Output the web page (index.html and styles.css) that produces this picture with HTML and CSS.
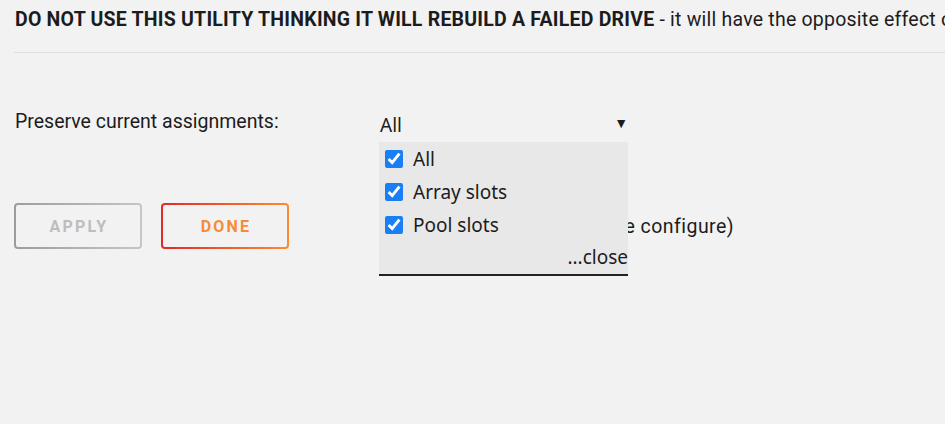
FILE: index.html
```html
<!DOCTYPE html>
<html lang="en">
<head>
<meta charset="utf-8">
<title>New Config</title>
<link rel="stylesheet" href="styles.css">
</head>
<body>
<div class="page">
  <p class="warning"><b>DO NOT USE THIS UTILITY THINKING IT WILL REBUILD A FAILED DRIVE</b> - it will have the opposite effect of making it impossible to rebuild an existing failed drive - you have been warned!</p>
  <hr class="rule">
  <form class="config">
    <div class="field">
      <span class="field-label">Preserve current assignments:</span>
      <div class="multi">
        <div class="multi-value"><span>All</span><span class="caret">&#9660;</span></div>
        <div class="multi-menu">
          <label class="multi-option"><input type="checkbox" checked><span>All</span></label>
          <label class="multi-option"><input type="checkbox" checked><span>Array slots</span></label>
          <label class="multi-option"><input type="checkbox" checked><span>Pool slots</span></label>
          <div class="multi-close">...close</div>
        </div>
      </div>
    </div>
    <div class="actions">
      <button type="button" class="btn btn-apply" disabled>Apply</button>
      <button type="button" class="btn btn-done">Done</button>
      <span class="note">(slots are cleared in the configure)</span>
    </div>
  </form>
</div>
</body>
</html>
```
FILE: styles.css
```css
html, body {
  margin: 0;
  background: #f2f2f2;
}

.page {
  box-sizing: border-box;
  min-height: 424px;
  font-family: Roboto, "Liberation Sans", sans-serif;
  font-size: 19.5px;
  line-height: 1.4;
  color: #1c1c1c;
  padding: 6px 0 0 15px;
}

.warning {
  margin: 0;
  white-space: nowrap;
  overflow: hidden;
  letter-spacing: 0.22px;
}

.warning b {
  font-weight: 700;
}

.rule {
  border: 0;
  border-top: 1px solid #dedede;
  margin: 19px 0 0 -1px;
}

.config {
  margin-top: 55px;
}

.field {
  display: flex;
  align-items: flex-start;
}

.field-label {
  width: 365px;
  flex: none;
}

.multi {
  position: relative;
  width: 249px;
  font-family: "Noto Sans", sans-serif;
  font-size: 19px;
}

.multi-value {
  display: flex;
  justify-content: space-between;
  align-items: center;
  height: 34px;
}

.caret {
  font-size: 14px;
  margin-right: 1px;
  margin-top: -5px;
}

.multi-menu {
  position: absolute;
  top: 34px;
  left: -1px;
  width: 249px;
  background: #e8e8e8;
  border-bottom: 2px solid #222;
  z-index: 2;
}

.multi-option {
  display: flex;
  align-items: center;
  gap: 10px;
  height: 33px;
  padding-left: 6px;
}

.multi-option input {
  width: 18px;
  height: 18px;
  margin: 0;
  accent-color: #1a7ef5;
}

.multi-close {
  text-align: right;
  line-height: 33px;
}

.actions {
  display: flex;
  align-items: center;
  width: 720px;
  margin-top: 61px;
  margin-left: -1px;
}

.btn {
  width: 128px;
  height: 46px;
  margin: 0 19px 0 0;
  border: 2px solid transparent;
  border-radius: 4px;
  font-family: Roboto, "Liberation Sans", sans-serif;
  font-size: 16px;
  font-weight: 700;
  letter-spacing: 2.2px;
  text-transform: uppercase;
  padding: 0 0 0 2px;
}

.btn-apply {
  color: #bdbdbd;
  background:
    linear-gradient(#f2f2f2, #f2f2f2) padding-box,
    linear-gradient(90deg, #9c9c9c, #c6c6c6) border-box;
}

.btn-done {
  color: #f98a35;
  background:
    linear-gradient(#f2f2f2, #f2f2f2) padding-box,
    linear-gradient(90deg, #e22828, #ff8c2f) border-box;
}

.note {
  margin-left: auto;
  white-space: nowrap;
  letter-spacing: 0.45px;
}
```
